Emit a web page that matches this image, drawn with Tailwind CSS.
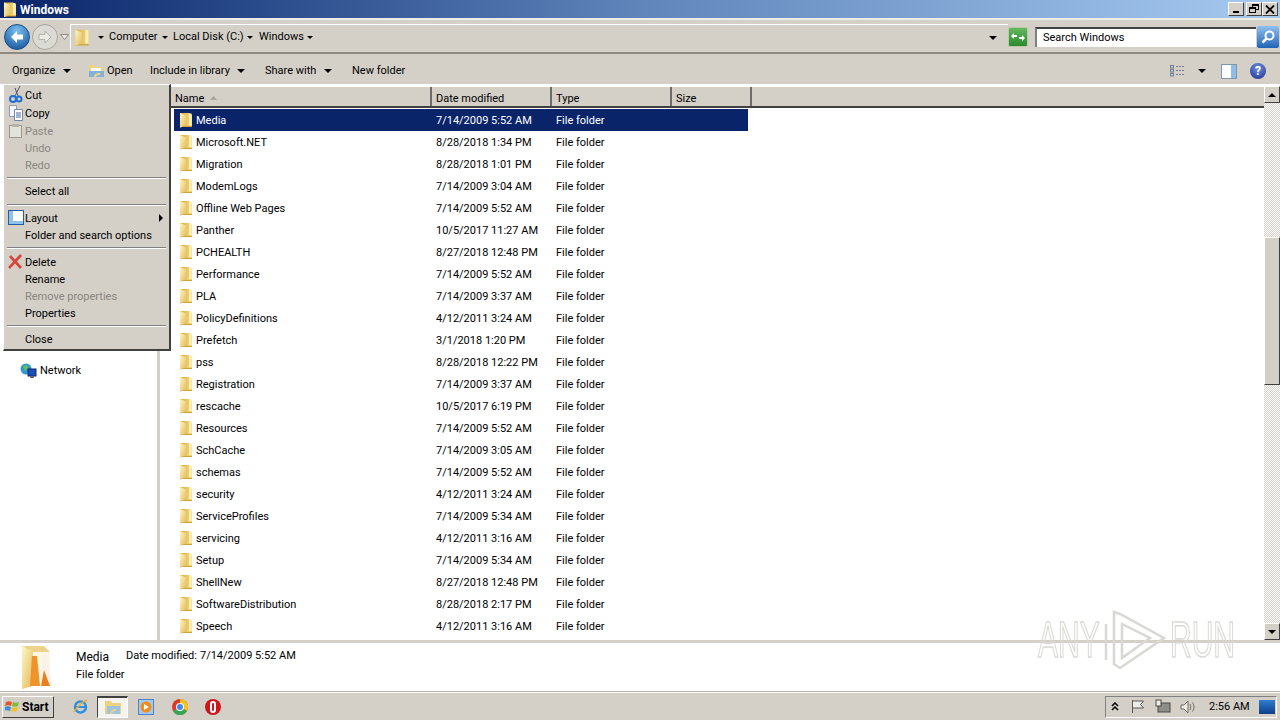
<!DOCTYPE html>
<html lang="en">
<head>
  <meta charset="UTF-8" />
  <title>Windows</title>
  <script src="https://cdn.jsdelivr.net/npm/@tailwindcss/browser@4"></script>
</head>
<body class="w-[1280px] h-[720px] overflow-hidden bg-[#d4d0c8] text-black text-[11px] font-['Roboto',sans-serif] flex flex-col">

  <!-- shared icons -->
  <svg class="absolute w-0 h-0">
    <defs>
      <linearGradient id="fg" x1="0" y1="0" x2="1" y2="1">
        <stop offset="0" stop-color="#fff6c4"/>
        <stop offset="1" stop-color="#e2bb5c"/>
      </linearGradient>
      <linearGradient id="fb" x1="0" y1="0" x2="1" y2="0">
        <stop offset="0" stop-color="#d8a93f"/>
        <stop offset="1" stop-color="#f6dc86"/>
      </linearGradient>
    </defs>
    <symbol id="folder" viewBox="0 0 16 16">
      <path d="M2 1h9l3 2v11.500H6L2 15.500z" fill="url(#fb)"/>
      <path d="M2 1 8 3.500V13.500L2 15.500z" fill="url(#fg)"/>
      <path d="M11 1.500h2.500V13H11z" fill="#fdf0b4"/>
      <path d="M2 15.500 6 14h8v1H4z" fill="#c9a13f"/>
    </symbol>
    <symbol id="caret" viewBox="0 0 8 4"><path d="M0 0h8L4 4z" fill="#000"/></symbol>
  </svg>

  <!-- title bar -->
  <div class="h-[18px] flex items-center bg-linear-to-r from-[#0a246a] via-[#5f85bb] to-[#a6caf0] pl-[2px] pr-[2px] shrink-0">
    <svg class="w-[16px] h-[17px]"><use href="#folder"/></svg>
    <span class="ml-[2px] pt-[2px] text-white font-bold text-[12px]">Windows</span>
    <div class="ml-auto flex gap-0">
      <div class="w-[16px] h-[14px] bg-[#d4d0c8] border border-t-white border-l-white border-r-[#404040] border-b-[#404040] flex items-end justify-center pb-[2px]"><div class="w-[6px] h-[2px] bg-black"></div></div>
      <div class="ml-[2px] w-[16px] h-[14px] bg-[#d4d0c8] border border-t-white border-l-white border-r-[#404040] border-b-[#404040] relative"><div class="absolute left-[5px] top-[1px] w-[7px] h-[6px] border border-black border-t-2"></div><div class="absolute left-[2px] top-[4px] w-[7px] h-[6px] border border-black border-t-2 bg-[#d4d0c8]"></div></div>
      <div class="w-[16px] h-[14px] bg-[#d4d0c8] border border-t-white border-l-white border-r-[#404040] border-b-[#404040] flex items-center justify-center">
        <svg width="10" height="9" viewBox="0 0 10 9"><path d="M1 0.500 9 8.500M9 0.500 1 8.500" stroke="#000" stroke-width="1.800"/></svg>
      </div>
    </div>
  </div>

  <!-- address bar -->
  <div class="h-[36px] shrink-0 flex items-center pt-[2px] border-t-2 border-t-[#eeece6] border-b-2 border-b-[#8d8a82] relative">
    <div class="ml-[4px] w-[26px] h-[26px] rounded-full bg-[radial-gradient(circle_at_50%_25%,#7cc0f0,#0b4a96)] border border-[#1b4f86] flex items-center justify-center">
      <svg width="16" height="14" viewBox="0 0 16 14"><path d="M8 1 2 7l6 6V9.500h6v-5H8z" fill="#fff"/></svg>
    </div>
    <div class="ml-[2px] w-[26px] h-[26px] rounded-full bg-[#dcdad4] border border-[#a9a69e] flex items-center justify-center">
      <svg width="16" height="14" viewBox="0 0 16 14"><path d="M8 1l6 6-6 6V9.500H2v-5h6z" fill="#ecebe6" stroke="#b5b2aa"/></svg>
    </div>
    <svg class="ml-[2px]" width="9" height="6" viewBox="0 0 9 6"><path d="M.5.5h8L4.500 5.500z" fill="#eeece6" stroke="#8d8a82"/></svg>
    <div class="ml-[1px] flex-1 h-[26px] flex items-center pl-[2px] border-t border-l border-white">
      <svg class="w-[18px] h-[21px]"><use href="#folder"/></svg>
      <svg class="ml-[7px] w-[6px] h-[3px]"><use href="#caret"/></svg>
      <span class="ml-[5px] w-[51px]">Computer</span>
      <svg class="ml-[2px] w-[6px] h-[3px]"><use href="#caret"/></svg>
      <span class="ml-[5px] w-[72px]">Local Disk (C:)</span>
      <svg class="ml-[2px] w-[6px] h-[3px]"><use href="#caret"/></svg>
      <span class="ml-[6px] w-[44px]">Windows</span>
      <svg class="ml-[4px] w-[6px] h-[3px]"><use href="#caret"/></svg>
      <svg class="ml-auto mr-[11px] w-[8px] h-[4px]"><use href="#caret"/></svg>
    </div>
    <div class="w-[20px] h-[20px] bg-linear-to-b from-[#63b95c] to-[#2a8a2e] border border-[#b7c9a8] rounded-[2px] flex items-center justify-center">
      <svg width="14" height="10" viewBox="0 0 14 10"><path d="M0 4l3-3v2h3v2H3v2zM14 6l-3 3V7H8V5h3V3z" fill="#fff"/></svg>
    </div>
    <div class="ml-[7px] w-[221px] h-[20px] bg-white border-t-2 border-l-2 border-t-[#404040] border-l-[#808080] pl-[6px] flex items-center">Search Windows</div>
    <div class="ml-[1px] mr-[1px] w-[22px] h-[22px] bg-linear-to-b from-[#8fc0ee] to-[#1f64b5] rounded-[2px] flex items-center justify-center">
      <svg width="16" height="16" viewBox="0 0 16 16"><circle cx="9.500" cy="6.500" r="4" fill="none" stroke="#fff" stroke-width="2"/><path d="M6.500 9.500 2.500 13.500" stroke="#fff" stroke-width="2.500"/></svg>
    </div>
  </div>

  <!-- toolbar -->
  <div class="h-[30px] shrink-0 flex items-center pl-[12px] pt-[4px]">
    <span class="w-[44px]">Organize</span>
    <svg class="ml-[7px] w-[8px] h-[4px]"><use href="#caret"/></svg>
    <svg class="ml-[17px]" width="17" height="16" viewBox="0 0 17 16"><path d="M1 2h5l1 2h8v10H1z" fill="#f0d27a"/><path d="M3 5h10v5H3z" fill="#fff"/><path d="M1 8h15v6H1z" fill="#7fb0d8"/><path d="M6 14c0-3 2-4 5-4l-1-1 3 2-3 2 1-1c-2 0-3 1-3 2z" fill="#e8d28a"/></svg>
    <span class="ml-[2px] w-[26px]">Open</span>
    <span class="ml-[17px] w-[80px]">Include in library</span>
    <svg class="ml-[7px] w-[8px] h-[4px]"><use href="#caret"/></svg>
    <span class="ml-[20px] w-[52px]">Share with</span>
    <svg class="ml-[7px] w-[8px] h-[4px]"><use href="#caret"/></svg>
    <span class="ml-[20px]">New folder</span>
    <svg class="ml-auto" width="16" height="14" viewBox="0 0 16 14"><g fill="none" stroke="#6f7f94"><rect x=".5" y="1.500" width="3" height="2.500"/><rect x=".5" y="5.500" width="3" height="2.500"/><rect x=".5" y="9.500" width="3" height="2.500"/><path d="M6 2.500h9M6 6.500h9M6 10.500h9" stroke-dasharray="2 1"/></g></svg>
    <svg class="ml-[12px] w-[8px] h-[4px]"><use href="#caret"/></svg>
    <svg class="ml-[15px]" width="16" height="15" viewBox="0 0 16 15"><rect x=".5" y=".5" width="15" height="14" fill="#fff" stroke="#7f97ad"/><rect x="10" y="1" width="5" height="13" fill="#8fbde6"/></svg>
    <div class="ml-[13px] mr-[14px] w-[16px] h-[16px] rounded-full bg-[radial-gradient(circle_at_50%_30%,#6f8fe0,#1c2f8a)] text-white font-bold text-[12px] leading-[16px] text-center">?</div>
  </div>

  <!-- main -->
  <div class="h-[556px] shrink-0 flex relative bg-white overflow-hidden">
    <!-- nav pane -->
    <div class="w-[160px] shrink-0 border-r-[3px] border-r-[#d4d0c8] pt-[277px] pl-[20px]">
      <div class="flex items-center h-[20px]">
        <svg width="17" height="17" viewBox="0 0 17 17"><circle cx="6" cy="6" r="5.500" fill="#2f9ad0"/><path d="M3 3l4-1 1 3-3 3z" fill="#6cc04a"/><rect x="8" y="6" width="8" height="7" fill="#1d4fb8" stroke="#0e2a6a"/><path d="M10 13h4v2h-4z" fill="#667"/></svg>
        <span class="ml-[3px]">Network</span>
      </div>
    </div>

    <!-- file list -->
    <div class="flex-1 flex flex-col min-w-0">
      <div class="mt-[2px] h-[22px] shrink-0 flex items-center bg-[#d4d0c8] border-t border-t-white border-b-2 border-b-[#404040]">
        <div class="w-[272px] h-full flex items-center pl-[15px] pt-[5px] border-r-2 border-r-[#6f6d68]">Name<svg class="ml-[6px] mb-[3px]" width="7" height="4" viewBox="0 0 7 4"><path d="M3.500 0 7 4H0z" fill="#a8a59c"/></svg></div>
        <div class="w-[120px] h-full flex items-center pl-[4px] pt-[5px] border-r-2 border-r-[#6f6d68]">Date modified</div>
        <div class="w-[120px] h-full flex items-center pl-[4px] pt-[5px] border-r-2 border-r-[#6f6d68]">Type</div>
        <div class="w-[80px] h-full flex items-center pl-[4px] pt-[5px] border-r-2 border-r-[#6f6d68]">Size</div>
      </div>
      <div class="mt-px pl-[14px] flex-1 overflow-hidden [&_span]:pt-[2px]">
        <div class="w-[574px] h-[22px] flex items-center bg-[#0a246a] text-white"><svg class="ml-[4px] w-[16px] h-[16px]"><use href="#folder"/></svg><span class="ml-[2px] w-[240px]">Media</span><span class="w-[120px]">7/14/2009 5:52 AM</span><span>File folder</span></div>
        <div class="w-[574px] h-[22px] flex items-center"><svg class="ml-[4px] w-[16px] h-[16px]"><use href="#folder"/></svg><span class="ml-[2px] w-[240px]">Microsoft.NET</span><span class="w-[120px]">8/28/2018 1:34 PM</span><span>File folder</span></div>
        <div class="w-[574px] h-[22px] flex items-center"><svg class="ml-[4px] w-[16px] h-[16px]"><use href="#folder"/></svg><span class="ml-[2px] w-[240px]">Migration</span><span class="w-[120px]">8/28/2018 1:01 PM</span><span>File folder</span></div>
        <div class="w-[574px] h-[22px] flex items-center"><svg class="ml-[4px] w-[16px] h-[16px]"><use href="#folder"/></svg><span class="ml-[2px] w-[240px]">ModemLogs</span><span class="w-[120px]">7/14/2009 3:04 AM</span><span>File folder</span></div>
        <div class="w-[574px] h-[22px] flex items-center"><svg class="ml-[4px] w-[16px] h-[16px]"><use href="#folder"/></svg><span class="ml-[2px] w-[240px]">Offline Web Pages</span><span class="w-[120px]">7/14/2009 5:52 AM</span><span>File folder</span></div>
        <div class="w-[574px] h-[22px] flex items-center"><svg class="ml-[4px] w-[16px] h-[16px]"><use href="#folder"/></svg><span class="ml-[2px] w-[240px]">Panther</span><span class="w-[120px]">10/5/2017 11:27 AM</span><span>File folder</span></div>
        <div class="w-[574px] h-[22px] flex items-center"><svg class="ml-[4px] w-[16px] h-[16px]"><use href="#folder"/></svg><span class="ml-[2px] w-[240px]">PCHEALTH</span><span class="w-[120px]">8/27/2018 12:48 PM</span><span>File folder</span></div>
        <div class="w-[574px] h-[22px] flex items-center"><svg class="ml-[4px] w-[16px] h-[16px]"><use href="#folder"/></svg><span class="ml-[2px] w-[240px]">Performance</span><span class="w-[120px]">7/14/2009 5:52 AM</span><span>File folder</span></div>
        <div class="w-[574px] h-[22px] flex items-center"><svg class="ml-[4px] w-[16px] h-[16px]"><use href="#folder"/></svg><span class="ml-[2px] w-[240px]">PLA</span><span class="w-[120px]">7/14/2009 3:37 AM</span><span>File folder</span></div>
        <div class="w-[574px] h-[22px] flex items-center"><svg class="ml-[4px] w-[16px] h-[16px]"><use href="#folder"/></svg><span class="ml-[2px] w-[240px]">PolicyDefinitions</span><span class="w-[120px]">4/12/2011 3:24 AM</span><span>File folder</span></div>
        <div class="w-[574px] h-[22px] flex items-center"><svg class="ml-[4px] w-[16px] h-[16px]"><use href="#folder"/></svg><span class="ml-[2px] w-[240px]">Prefetch</span><span class="w-[120px]">3/1/2018 1:20 PM</span><span>File folder</span></div>
        <div class="w-[574px] h-[22px] flex items-center"><svg class="ml-[4px] w-[16px] h-[16px]"><use href="#folder"/></svg><span class="ml-[2px] w-[240px]">pss</span><span class="w-[120px]">8/28/2018 12:22 PM</span><span>File folder</span></div>
        <div class="w-[574px] h-[22px] flex items-center"><svg class="ml-[4px] w-[16px] h-[16px]"><use href="#folder"/></svg><span class="ml-[2px] w-[240px]">Registration</span><span class="w-[120px]">7/14/2009 3:37 AM</span><span>File folder</span></div>
        <div class="w-[574px] h-[22px] flex items-center"><svg class="ml-[4px] w-[16px] h-[16px]"><use href="#folder"/></svg><span class="ml-[2px] w-[240px]">rescache</span><span class="w-[120px]">10/5/2017 6:19 PM</span><span>File folder</span></div>
        <div class="w-[574px] h-[22px] flex items-center"><svg class="ml-[4px] w-[16px] h-[16px]"><use href="#folder"/></svg><span class="ml-[2px] w-[240px]">Resources</span><span class="w-[120px]">7/14/2009 5:52 AM</span><span>File folder</span></div>
        <div class="w-[574px] h-[22px] flex items-center"><svg class="ml-[4px] w-[16px] h-[16px]"><use href="#folder"/></svg><span class="ml-[2px] w-[240px]">SchCache</span><span class="w-[120px]">7/14/2009 3:05 AM</span><span>File folder</span></div>
        <div class="w-[574px] h-[22px] flex items-center"><svg class="ml-[4px] w-[16px] h-[16px]"><use href="#folder"/></svg><span class="ml-[2px] w-[240px]">schemas</span><span class="w-[120px]">7/14/2009 5:52 AM</span><span>File folder</span></div>
        <div class="w-[574px] h-[22px] flex items-center"><svg class="ml-[4px] w-[16px] h-[16px]"><use href="#folder"/></svg><span class="ml-[2px] w-[240px]">security</span><span class="w-[120px]">4/12/2011 3:24 AM</span><span>File folder</span></div>
        <div class="w-[574px] h-[22px] flex items-center"><svg class="ml-[4px] w-[16px] h-[16px]"><use href="#folder"/></svg><span class="ml-[2px] w-[240px]">ServiceProfiles</span><span class="w-[120px]">7/14/2009 5:34 AM</span><span>File folder</span></div>
        <div class="w-[574px] h-[22px] flex items-center"><svg class="ml-[4px] w-[16px] h-[16px]"><use href="#folder"/></svg><span class="ml-[2px] w-[240px]">servicing</span><span class="w-[120px]">4/12/2011 3:16 AM</span><span>File folder</span></div>
        <div class="w-[574px] h-[22px] flex items-center"><svg class="ml-[4px] w-[16px] h-[16px]"><use href="#folder"/></svg><span class="ml-[2px] w-[240px]">Setup</span><span class="w-[120px]">7/14/2009 5:34 AM</span><span>File folder</span></div>
        <div class="w-[574px] h-[22px] flex items-center"><svg class="ml-[4px] w-[16px] h-[16px]"><use href="#folder"/></svg><span class="ml-[2px] w-[240px]">ShellNew</span><span class="w-[120px]">8/27/2018 12:48 PM</span><span>File folder</span></div>
        <div class="w-[574px] h-[22px] flex items-center"><svg class="ml-[4px] w-[16px] h-[16px]"><use href="#folder"/></svg><span class="ml-[2px] w-[240px]">SoftwareDistribution</span><span class="w-[120px]">8/28/2018 2:17 PM</span><span>File folder</span></div>
        <div class="w-[574px] h-[22px] flex items-center"><svg class="ml-[4px] w-[16px] h-[16px]"><use href="#folder"/></svg><span class="ml-[2px] w-[240px]">Speech</span><span class="w-[120px]">4/12/2011 3:16 AM</span><span>File folder</span></div>
      </div>
    </div>

    <!-- scrollbar -->
    <div class="w-[16px] shrink-0 mt-[2px] flex flex-col bg-[repeating-conic-gradient(#d4d0c8_0_25%,#fff_0_50%)] bg-size-[2px_2px]">
      <div class="h-[17px] shrink-0 bg-[#d4d0c8] border border-t-white border-l-white border-r-[#404040] border-b-[#404040] flex items-center justify-center"><svg class="w-[8px] h-[4px] rotate-180"><use href="#caret"/></svg></div>
      <div class="h-[134px] shrink-0"></div>
      <div class="h-[148px] shrink-0 bg-[#d4d0c8] border border-t-white border-l-white border-r-[#404040] border-b-[#404040]"></div>
      <div class="flex-1"></div>
      <div class="h-[17px] shrink-0 bg-[#d4d0c8] border border-t-white border-l-white border-r-[#404040] border-b-[#404040] flex items-center justify-center"><svg class="w-[8px] h-[4px]"><use href="#caret"/></svg></div>
    </div>

    <!-- context menu -->
    <div class="absolute left-[3px] top-0 w-[168px] h-[267px] bg-[#d4d0c8] border border-t-white border-l-white border-r-2 border-b-2 border-r-[#404040] border-b-[#404040] pt-px">
      <div class="h-[18px] flex items-center pl-[21px] pt-[2px] relative"><svg class="absolute left-[5px] top-0" width="14" height="17" viewBox="0 0 14 17"><path d="M11 0 6 10M6 2l3 8" stroke="#556" fill="none"/><circle cx="4" cy="13" r="3" fill="none" stroke="#1f6fd0" stroke-width="2"/><circle cx="10" cy="13" r="2.500" fill="none" stroke="#1f6fd0" stroke-width="2"/></svg>Cut</div>
      <div class="h-[18px] flex items-center pl-[21px] pt-[2px] relative"><svg class="absolute left-[5px] top-px" width="15" height="16" viewBox="0 0 15 16"><path d="M.5.5h7v11h-7z" fill="#f4f6fa" stroke="#8a9ab5"/><path d="M5.500 4.500h8v11h-8z" fill="#fff" stroke="#6f86a8"/><path d="M7 8h5M7 10h5M7 12h5" stroke="#4a6a9a"/></svg>Copy</div>
      <div class="h-[18px] flex items-center pl-[21px] pt-[2px] relative text-[#8a8780]"><svg class="absolute left-[5px] top-[2px]" width="13" height="14" viewBox="0 0 13 14"><rect x=".5" y="1.500" width="12" height="12" fill="#e4e2dc" stroke="#9a978f"/><rect x="3" y="0" width="7" height="3" fill="#b5b2aa"/></svg>Paste</div>
      <div class="h-[17px] flex items-center pl-[21px] pt-[2px] text-[#8a8780]">Undo</div>
      <div class="h-[17px] flex items-center pl-[21px] pt-[2px] text-[#8a8780]">Redo</div>
      <div class="h-[8px] flex items-center px-[3px]"><div class="w-full border-t border-t-[#808080] border-b border-b-white"></div></div>
      <div class="h-[18px] flex items-center pl-[21px] pt-[2px]">Select all</div>
      <div class="h-[9px] flex items-center px-[3px]"><div class="w-full border-t border-t-[#808080] border-b border-b-white"></div></div>
      <div class="h-[18px] flex items-center pl-[21px] pt-[2px] relative"><svg class="absolute left-[4px] top-[1px]" width="16" height="15" viewBox="0 0 16 15"><rect x=".5" y=".5" width="15" height="14" fill="#fff" stroke="#2a5aa0"/><rect x="1" y="1" width="4" height="13" fill="#8fc4ea"/><rect x="1" y="11" width="14" height="3" fill="#8fc4ea"/></svg>Layout<svg class="absolute right-[6px] top-[5px]" width="4" height="8" viewBox="0 0 4 8"><path d="M0 0l4 4-4 4z" fill="#000"/></svg></div>
      <div class="h-[16px] flex items-center pl-[21px] pt-[2px]">Folder and search options</div>
      <div class="h-[10px] flex items-center px-[3px]"><div class="w-full border-t border-t-[#808080] border-b border-b-white"></div></div>
      <div class="h-[18px] flex items-center pl-[21px] pt-[2px] relative"><svg class="absolute left-[4px] top-[1px]" width="15" height="15" viewBox="0 0 15 15"><path d="M1 14 13 1M2 2l11 12" stroke="#d8453f" stroke-width="2.600"/></svg>Delete</div>
      <div class="h-[16px] flex items-center pl-[21px] pt-[2px]">Rename</div>
      <div class="h-[18px] flex items-center pl-[21px] pt-[2px] text-[#8a8780]">Remove properties</div>
      <div class="h-[16px] flex items-center pl-[21px] pt-[2px]">Properties</div>
      <div class="h-[9px] flex items-center px-[3px]"><div class="w-full border-t border-t-[#808080] border-b border-b-white"></div></div>
      <div class="h-[18px] flex items-center pl-[21px] pt-[2px]">Close</div>
    </div>
  </div>

  <!-- details pane -->
  <div class="h-[52px] shrink-0 bg-white border-t-[3px] border-t-[#d4d0c8] border-b border-b-[#b5b2aa] flex items-center pl-[19px]">
    <svg width="36" height="46" viewBox="0 0 36 46"><path d="M3 2h22l6 6v34H12l-9 3z" fill="#ecd28a"/><path d="M3 2l11 5v35l-11 3z" fill="url(#fg)"/><path d="M14 8h17v34H14z" fill="#fdf6e0"/><path d="M13 12h5l3 30h-10z" fill="#f0932a"/><path d="M24 10h4l5 32H22z" fill="#f7f3ea"/><path d="M25 26l6 16h-9z" fill="#e9801e"/></svg>
    <div class="ml-[21px] mb-[2px] flex flex-col gap-[5px]">
      <div class="flex items-center h-[14px]"><span class="w-[50px] text-[12px]">Media</span><span>Date modified:</span><span class="ml-[3px]">7/14/2009 5:52 AM</span></div>
      <div class="h-[14px] flex items-center">File folder</div>
    </div>
  </div>

  <!-- taskbar -->
  <div class="flex-1 flex items-center pl-[2px] pr-[3px] border-t border-t-white">
    <div class="w-[52px] h-[22px] flex items-center pl-[2px] border border-t-white border-l-white border-r-[#404040] border-b-[#404040]">
      <svg width="17" height="15" viewBox="0 0 17 15"><path d="M1 3c2-1 4-1 6 0L6 7C4 6 2 6 0 7z" fill="#e8552a"/><path d="M8 3c2 1 4 1 6 0l-1 4c-2 1-4 1-6 0z" fill="#7fba3a"/><path d="M0 8c2-1 4-1 6 0l-1 4c-2-1-4-1-6 0z" fill="#3a8fd8"/><path d="M7 8c2 1 4 1 6 0l-1 4c-2 1-4 1-6 0z" fill="#f2c12e"/></svg>
      <span class="font-bold text-[12px] pt-px">Start</span>
    </div>
    <svg class="ml-[18px]" width="17" height="17" viewBox="0 0 17 17"><circle cx="8.500" cy="9" r="5.500" fill="none" stroke="#2f8fe0" stroke-width="2.500"/><path d="M3 9h11" stroke="#2f8fe0" stroke-width="2"/><path d="M2 14C5 9 11 3 15 2" stroke="#e8b030" stroke-width="1.500" fill="none"/></svg>
    <div class="ml-[8px] w-[31px] h-[22px] flex items-center justify-center bg-[#f4f3f0] border border-t-2 border-t-[#404040] border-l-[#404040] border-r-white border-b-white">
      <svg width="18" height="16" viewBox="0 0 18 16"><path d="M1 2h6l1 2h9v11H1z" fill="#ecd27e"/><path d="M3 7h13v8H3z" fill="#9cc4e0"/><path d="M7 15c0-3 2-4 5-4" stroke="#e8d28a" stroke-width="2" fill="none"/></svg>
    </div>
    <svg class="ml-[10px]" width="16" height="16" viewBox="0 0 16 16"><rect x=".5" y=".5" width="15" height="15" fill="#a6c8ea" stroke="#4a86c8"/><circle cx="8" cy="8" r="5.500" fill="#f08a1c"/><path d="M6 5l5 3-5 3z" fill="#fff"/></svg>
    <svg class="ml-[18px]" width="16" height="16" viewBox="0 0 16 16"><circle cx="8" cy="8" r="8" fill="#e0392b"/><path d="M8 0a8 8 0 0 1 7 12L8 8z" fill="#f5c518"/><path d="M1 12 8 8l7 4a8 8 0 0 1-14 0z" fill="#36a852"/><circle cx="8" cy="8" r="4" fill="#fff"/><circle cx="8" cy="8" r="3" fill="#4285f4"/></svg>
    <div class="ml-[17px] w-[16px] h-[16px] rounded-full bg-[#d0141c] flex items-center justify-center"><div class="w-[6px] h-[12px] rounded-full border-2 border-white"></div></div>

    <div class="ml-auto w-[172px] h-[22px] flex items-center pl-[5px] border border-t-[#808080] border-l-[#808080] border-r-white border-b-white">
      <svg width="8" height="10" viewBox="0 0 8 10"><path d="M1 4l3-3 3 3M1 8l3-3 3 3" fill="none" stroke="#000" stroke-width="1.500"/></svg>
      <svg class="ml-[12px]" width="14" height="15" viewBox="0 0 14 15"><path d="M1.500 1v13M1.500 2h11l-3 3.500 3 3.500h-11" fill="#eeece6" stroke="#5c5a55"/></svg>
      <svg class="ml-[10px]" width="16" height="15" viewBox="0 0 16 15"><rect x="3" y="4" width="12" height="9" fill="#8f8d87" stroke="#4c4a46"/><rect x="1" y="1" width="5" height="6" fill="#eeece6" stroke="#4c4a46"/></svg>
      <svg class="ml-[9px]" width="16" height="14" viewBox="0 0 16 14"><path d="M1 5h3l4-4v12L4 9H1z" fill="#eeece6" stroke="#6b6963"/><path d="M10 4c1 2 1 4 0 6M12.500 2.500c2 3 2 6 0 9" fill="none" stroke="#6b6963"/></svg>
      <span class="ml-[13px] pt-[2px] text-[11px]">2:56 AM</span>
      <div class="ml-auto mr-[1px] w-[16px] h-[14px] bg-linear-to-b from-[#2f7fd0] to-[#0f3f8a]"></div>
    </div>
  </div>

  <!-- watermark -->
  <div class="absolute left-[1038px] top-[608px] w-[200px] h-[64px] flex items-center pointer-events-none blur-[0.5px]">
    <span class="w-[64px] shrink-0 font-['Liberation_Sans',sans-serif] text-[50px] leading-none text-transparent [-webkit-text-stroke:1.500px_#d8d8d4] scale-x-60 origin-left whitespace-nowrap">ANY</span>
    <svg class="shrink-0" width="64" height="64" viewBox="0 0 64 64"><path d="M12 4v52l6 4 44-30L18 6zM20 16l28 14-28 20z" fill="none" stroke="#d8d8d4" stroke-width="2.500"/><path d="M4 16v36" stroke="#d8d8d4" stroke-width="2.500"/></svg>
    <span class="ml-[4px] w-[64px] shrink-0 font-['Liberation_Sans',sans-serif] text-[50px] leading-none text-transparent [-webkit-text-stroke:1.500px_#d8d8d4] scale-x-60 origin-left whitespace-nowrap">RUN</span>
  </div>
</body>
</html>
